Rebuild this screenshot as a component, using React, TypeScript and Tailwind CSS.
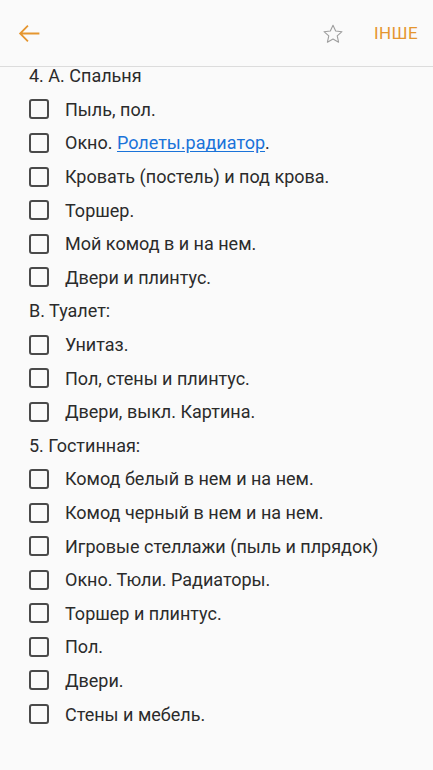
import React from 'react';

type Item = { kind: 'heading'; text: string } | { kind: 'task'; text: React.ReactNode };

const items: Item[] = [
  { kind: 'heading', text: '4. А. Спальня' },
  { kind: 'task', text: 'Пыль, пол.' },
  {
    kind: 'task',
    text: (
      <>
        Окно. <span className="text-[#1a73d9] underline underline-offset-2">Ролеты.радиатор</span>.
      </>
    ),
  },
  { kind: 'task', text: 'Кровать (постель) и под крова.' },
  { kind: 'task', text: 'Торшер.' },
  { kind: 'task', text: 'Мой комод в и на нем.' },
  { kind: 'task', text: 'Двери и плинтус.' },
  { kind: 'heading', text: 'В. Туалет:' },
  { kind: 'task', text: 'Унитаз.' },
  { kind: 'task', text: 'Пол, стены и плинтус.' },
  { kind: 'task', text: 'Двери, выкл. Картина.' },
  { kind: 'heading', text: '5. Гостинная:' },
  { kind: 'task', text: 'Комод белый в нем и на нем.' },
  { kind: 'task', text: 'Комод черный в нем и на нем.' },
  { kind: 'task', text: 'Игровые стеллажи (пыль и плрядок)' },
  { kind: 'task', text: 'Окно. Тюли. Радиаторы.' },
  { kind: 'task', text: 'Торшер и плинтус.' },
  { kind: 'task', text: 'Пол.' },
  { kind: 'task', text: 'Двери.' },
  { kind: 'task', text: 'Стены и мебель.' },
];

export default function App() {
  return (
    <div
      className="flex h-[770px] w-[433px] flex-col overflow-hidden bg-[#fafafa] text-[#2b2b2b]"
      style={{ fontFamily: 'Roboto, "Noto Sans", sans-serif' }}
    >
      {/* Header */}
      <div className="relative z-10 flex h-[67px] shrink-0 items-center border-b border-[#dcdcdc] bg-[#fafafa] pl-[17px] pr-[15px] pt-[1px]">
        <svg className="h-[25px] w-[25px] text-[#e5962f]" viewBox="0 0 24 24" fill="none" stroke="currentColor" strokeWidth={1.7}>
          <path d="M21.5 12H3M10.5 4.5 3 12l7.5 7.5" />
        </svg>
        <div className="flex-1" />
        <svg className="mr-[30px] h-[22px] w-[22px] text-[#9e9e9e]" viewBox="0 0 24 24" fill="none" stroke="currentColor" strokeWidth={1.2} strokeLinejoin="round">
          <path d="M12 2.5l2.9 6.3 6.9.7-5.2 4.6 1.5 6.8L12 17.4l-6.1 3.5 1.5-6.8-5.2-4.6 6.9-.7z" />
        </svg>
        <span className="text-[17px] tracking-wide text-[#e5962f]">ІНШЕ</span>
      </div>

      {/* List */}
      <div className="-mt-[8px] flex flex-col px-[29px]">
        {items.map((item, i) =>
          item.kind === 'heading' ? (
            <div key={i} className="flex h-[33.6px] items-center text-[18px]">
              {item.text}
            </div>
          ) : (
            <div key={i} className="flex h-[33.6px] items-center gap-4 text-[18px]">
              <span className="h-5 w-5 shrink-0 rounded-[3px] border-2 border-[#4a4a4a]" />
              <span>{item.text}</span>
            </div>
          )
        )}
      </div>
    </div>
  );
}
